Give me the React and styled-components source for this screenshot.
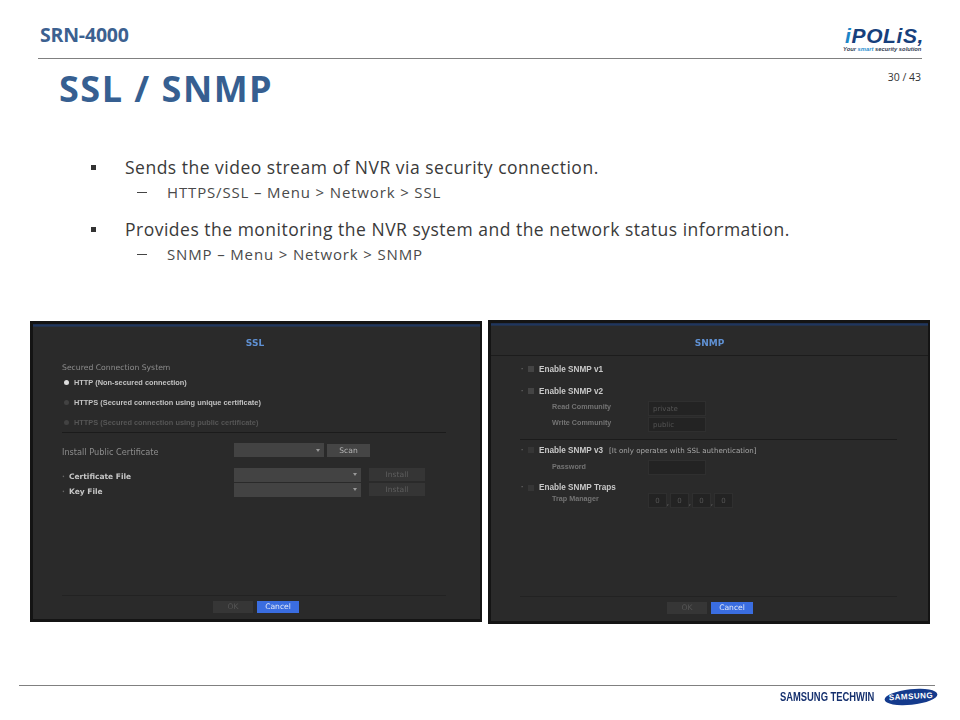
import styled, { createGlobalStyle } from 'styled-components';

const GlobalStyle = createGlobalStyle`
    html, body { margin: 0; padding: 0; background: #fff; }
    body { font-family: "Open Sans", "Noto Sans", sans-serif; }
`;

const Slide = styled.div`
    width: 960px;
    height: 720px;
    display: flex;
    flex-direction: column;
    overflow: hidden;
`;

const TopBar = styled.header`
    height: 58px;
    margin: 0 38px;
    display: flex;
    justify-content: space-between;
    align-items: flex-end;
    border-bottom: 1px solid #808080;
`;

const Product = styled.div`
    margin: 0 0 11px 2px;
    font-size: 19.5px;
    line-height: 24px;
    font-weight: 700;
    color: #3c6190;
    letter-spacing: -0.2px;
`;

const Logo = styled.div`
    width: 84px;
    margin: 0 -2px 5px 0;
    text-align: right;
`;

const LogoWord = styled.div`
    font-family: "Liberation Sans", sans-serif;
    font-size: 21px;
    line-height: 17px;
    font-weight: 700;
    font-style: italic;
    letter-spacing: 0.6px;
    color: #17407c;
    span { color: #1c86c8; }
`;

const LogoTag = styled.div`
    margin: 2px 0 0 3px;
    font-family: "Liberation Sans", sans-serif;
    font-size: 5.8px;
    line-height: 7px;
    font-weight: 700;
    font-style: italic;
    text-align: left;
    white-space: nowrap;
    color: #333d52;
    span { color: #2c90cf; }
`;

const TitleRow = styled.div`
    display: flex;
    justify-content: space-between;
    padding: 0 39px 0 59px;
    height: 96px;
`;

const Title = styled.h1`
    margin: 5px 0 0;
    font-size: 36px;
    line-height: 50px;
    font-weight: 700;
    letter-spacing: 1.5px;
    color: #365f91;
`;

const PageNum = styled.div`
    margin-top: 10px;
    font-size: 10.5px;
    line-height: 16px;
    color: #333;
`;

const Bullets = styled.ul`
    list-style: none;
    margin: 0;
    padding: 0 0 0 91px;
    height: 165px;
`;

const Bullet = styled.li`
    display: flex;
    align-items: center;
    height: 24px;
    font-size: 17.5px;
    letter-spacing: 0.5px;
    color: #3a3a3a;
    white-space: nowrap;
    &::before {
        content: '';
        width: 5px;
        height: 5px;
        margin-right: 29px;
        background: #333;
    }
`;

const SubBullet = styled.li`
    display: flex;
    align-items: center;
    height: 26px;
    margin-bottom: 12px;
    padding-left: 46px;
    font-size: 15px;
    letter-spacing: 0.85px;
    color: #4a4a4a;
    white-space: nowrap;
    &::before {
        content: '';
        width: 10px;
        height: 1px;
        margin-right: 20px;
        background: #444;
    }
`;

const Shots = styled.div`
    display: flex;
    align-items: flex-start;
    gap: 6px;
    padding-left: 30px;
    height: 365px;
`;

const Screen = styled.section`
    box-sizing: border-box;
    width: ${p => p.$w}px;
    height: ${p => p.$h}px;
    margin-top: ${p => p.$top || 0}px;
    border: 3px solid #141414;
    border-right-width: 2px;
    background: linear-gradient(#1f2c46 0, #1f3a68 2px, #2a2a2a 3px, #2a2a2a 100%);
    display: flex;
    flex-direction: column;
    font-family: "DejaVu Sans", sans-serif;
    font-size: 7.6px;
    color: #c4c4c4;
    white-space: nowrap;
`;

const ScreenBody = styled.div`
    flex: 1;
    padding: 0 ${p => p.$right}px 0 ${p => p.$left}px;
    filter: blur(0.45px);
`;

const ScreenTitle = styled.div`
    height: ${p => p.$h}px;
    padding: ${p => p.$pad}px ${p => p.$nudge || 0}px 0 0;
    box-sizing: border-box;
    text-align: center;
    font-size: 9px;
    font-weight: 700;
    color: #5f90d2;
    filter: blur(0.3px);
    border-bottom: ${p => (p.$line ? '1px solid #1c1c1c' : 'none')};
`;

const GroupLabel = styled.div`
    height: 14px;
    line-height: 14px;
    font-size: 7.7px;
    color: #8c8c8c;
`;

const RadioRow = styled.div`
    display: flex;
    align-items: center;
    gap: 5px;
    height: ${p => p.$h || 20}px;
    margin-top: ${p => p.$mt || 0}px;
    padding-left: 2px;
    font-family: "Liberation Sans", sans-serif;
    font-weight: 700;
    font-size: 7.4px;
    color: ${p => (p.$off ? '#555' : '#c2c2c2')};
`;

const Radio = styled.span`
    width: 5px;
    height: 5px;
    border-radius: 50%;
    background: ${p => (p.$on ? '#dcdcdc' : '#424242')};
`;

const Rule = styled.div`
    height: 1px;
    margin: ${p => p.$m || '0'};
    background: #1b1b1b;
`;

const FormRow = styled.div`
    display: flex;
    align-items: center;
    height: ${p => p.$h}px;
`;

const FieldLabel = styled.div`
    position: relative;
    width: 172px;
    box-sizing: border-box;
    padding-top: ${p => (p.$strong ? '4px' : '3px')};
    padding-left: ${p => (p.$strong ? '7px' : '0')};
    font-size: ${p => (p.$strong ? '7.5px' : '8.2px')};
    font-weight: ${p => (p.$strong ? 700 : 400)};
    color: ${p => (p.$strong ? '#c6c6c6' : '#8c8c8c')};
    &::before {
        content: '${p => (p.$strong ? '·' : '')}';
        position: absolute;
        left: 0;
        color: #666;
    }
`;

const Select = styled.div`
    box-sizing: border-box;
    width: ${p => p.$w}px;
    height: 14px;
    padding-right: 4px;
    display: flex;
    align-items: center;
    justify-content: flex-end;
    background: #434343;
    &::after {
        content: '';
        border: 2px solid transparent;
        border-top: 3px solid #999;
        border-bottom: 0;
    }
`;

const GhostBtn = styled.div`
    width: ${p => p.$w}px;
    height: 13px;
    margin-left: ${p => p.$gap}px;
    line-height: 13px;
    text-align: center;
    background: ${p => (p.$off ? '#353535' : '#454545')};
    color: ${p => (p.$off ? '#5e5e5e' : '#b5b5b5')};
`;

const ScreenFoot = styled.div`
    height: ${p => p.$h}px;
    margin: 0 ${p => p.$right}px 0 ${p => p.$left}px;
    padding: 5px 0 0 ${p => p.$start}px;
    box-sizing: border-box;
    display: flex;
    gap: 4px;
    border-top: 1px solid #222;
    filter: blur(0.4px);
`;

const FootBtn = styled.div`
    width: ${p => p.$w}px;
    height: 12px;
    line-height: 12px;
    text-align: center;
    background: ${p => (p.$primary ? '#3a6de0' : '#363636')};
    color: ${p => (p.$primary ? '#e3e9f8' : '#555')};
`;

const CheckRow = styled.div`
    position: relative;
    display: flex;
    align-items: center;
    box-sizing: border-box;
    height: ${p => p.$h}px;
    padding-top: ${p => p.$pad || 0}px;
    font-family: "Liberation Sans", sans-serif;
    font-weight: 700;
    font-size: 8.2px;
    color: #c8c8c8;
    &::before {
        content: '·';
        position: absolute;
        left: 1px;
        color: #666;
    }
`;

const Check = styled.span`
    width: 6px;
    height: 6px;
    margin: 0 5px 0 8px;
    background: ${p => (p.$dim ? '#363636' : '#444')};
`;

const Note = styled.span`
    margin-left: 6px;
    font-family: "DejaVu Sans", sans-serif;
    font-size: 7.1px;
    font-weight: 400;
    color: #a8a8a8;
`;

const SubRow = styled.div`
    display: flex;
    align-items: center;
    height: ${p => p.$h}px;
    padding-left: 32px;
    font-family: "Liberation Sans", sans-serif;
    font-size: 7.2px;
    font-weight: 700;
    color: #747474;
`;

const SubLabel = styled.div`
    width: 96px;
    padding-bottom: ${p => p.$lift || 3}px;
`;

const Input = styled.div`
    position: relative;
    box-sizing: border-box;
    width: ${p => p.$w}px;
    height: 15px;
    line-height: 14px;
    padding-left: ${p => (p.$center ? 0 : 4)}px;
    text-align: ${p => (p.$center ? 'center' : 'left')};
    background: #232323;
    border: 1px solid #2f2f2f;
    font-family: "DejaVu Sans", sans-serif;
    font-weight: 400;
    font-size: 7px;
    color: #555;
`;

const Octets = styled.div`
    display: flex;
    gap: 3px;
`;

const Octet = styled(Input)`
    &:not(:last-child)::after {
        content: ',';
        position: absolute;
        right: -3px;
        bottom: -3px;
        color: #777;
    }
`;

const Footer = styled.footer`
    margin: 0 25px 0 19px;
    height: 35px;
    padding-top: 1px;
    box-sizing: border-box;
    border-top: 1px solid #808080;
    display: flex;
    justify-content: flex-end;
    align-items: flex-start;
    gap: 10px;
`;

const Techwin = styled.div`
    width: 94px;
    font-family: "Liberation Sans", sans-serif;
    font-size: 12.5px;
    line-height: 20px;
    font-weight: 700;
    white-space: nowrap;
    transform: scaleX(0.75);
    transform-origin: left center;
    color: #15306e;
`;

const SamsungMark = styled.svg`
    margin-right: -3px;
`;

export default function App() {
    return (
        <Slide>
            <GlobalStyle />
            <TopBar>
                <Product>SRN-4000</Product>
                <Logo>
                    <LogoWord><span>i</span>POLiS,</LogoWord>
                    <LogoTag>Your <span>smart</span> security solution</LogoTag>
                </Logo>
            </TopBar>
            <TitleRow>
                <Title>SSL / SNMP</Title>
                <PageNum>30 / 43</PageNum>
            </TitleRow>
            <Bullets>
                <Bullet>Sends the video stream of NVR via security connection.</Bullet>
                <SubBullet>HTTPS/SSL – Menu &gt; Network &gt; SSL</SubBullet>
                <Bullet>Provides the monitoring the NVR system and the network status information.</Bullet>
                <SubBullet>SNMP – Menu &gt; Network &gt; SNMP</SubBullet>
            </Bullets>
            <Shots>
                <Screen $w={452} $h={301} $top={1}>
                    <ScreenTitle $h={37} $pad={14} $nudge={3}>SSL</ScreenTitle>
                    <ScreenBody $left={29} $right={34}>
                        <GroupLabel>Secured Connection System</GroupLabel>
                        <RadioRow $h={14}><Radio $on />HTTP (Non-secured connection)</RadioRow>
                        <RadioRow $mt={3}><Radio />HTTPS (Secured connection using unique certificate)</RadioRow>
                        <RadioRow $off><Radio />HTTPS (Secured connection using public certificate)</RadioRow>
                        <Rule />
                        <FormRow $h={34}>
                            <FieldLabel>Install Public Certificate</FieldLabel>
                            <Select $w={90} />
                            <GhostBtn $w={43} $gap={3}>Scan</GhostBtn>
                        </FormRow>
                        <FormRow $h={15}>
                            <FieldLabel $strong>Certificate File</FieldLabel>
                            <Select $w={127} />
                            <GhostBtn $w={56} $gap={8} $off>Install</GhostBtn>
                        </FormRow>
                        <FormRow $h={15}>
                            <FieldLabel $strong>Key File</FieldLabel>
                            <Select $w={127} />
                            <GhostBtn $w={56} $gap={8} $off>Install</GhostBtn>
                        </FormRow>
                    </ScreenBody>
                    <ScreenFoot $h={24} $left={29} $right={34} $start={151}>
                        <FootBtn $w={40}>OK</FootBtn>
                        <FootBtn $w={42} $primary>Cancel</FootBtn>
                    </ScreenFoot>
                </Screen>
                <Screen $w={442} $h={304}>
                    <ScreenTitle $h={33} $pad={15} $line>SNMP</ScreenTitle>
                    <ScreenBody $left={29} $right={31}>
                        <CheckRow $h={26}><Check />Enable SNMP v1</CheckRow>
                        <CheckRow $h={18}><Check />Enable SNMP v2</CheckRow>
                        <SubRow $h={16}><SubLabel>Read Community</SubLabel><Input $w={58}>private</Input></SubRow>
                        <SubRow $h={16}><SubLabel>Write Community</SubLabel><Input $w={58}>public</Input></SubRow>
                        <Rule $m="7px 0 0" />
                        <CheckRow $h={20}><Check $dim />Enable SNMP v3<Note>[It only operates with SSL authentication]</Note></CheckRow>
                        <SubRow $h={15}><SubLabel>Password</SubLabel><Input $w={58} /></SubRow>
                        <CheckRow $h={19} $pad={6}><Check $dim />Enable SNMP Traps</CheckRow>
                        <SubRow $h={12}>
                            <SubLabel $lift={4}>Trap Manager</SubLabel>
                            <Octets>
                                <Octet $w={19} $center>0</Octet>
                                <Octet $w={19} $center>0</Octet>
                                <Octet $w={19} $center>0</Octet>
                                <Octet $w={19} $center>0</Octet>
                            </Octets>
                        </SubRow>
                    </ScreenBody>
                    <ScreenFoot $h={25} $left={29} $right={31} $start={147}>
                        <FootBtn $w={40}>OK</FootBtn>
                        <FootBtn $w={42} $primary>Cancel</FootBtn>
                    </ScreenFoot>
                </Screen>
            </Shots>
            <Footer>
                <Techwin>SAMSUNG TECHWIN</Techwin>
                <SamsungMark width="54" height="20" viewBox="0 0 54 20">
                    <ellipse cx="27" cy="10" rx="26.5" ry="7.8" transform="rotate(-6 27 10)" fill="#143a8c" />
                    <text x="27" y="12" textAnchor="middle" fontFamily="Liberation Sans, sans-serif" fontSize="8" fontWeight="700" letterSpacing="0.5" fill="#fff" transform="rotate(-3 27 10)">
                        SAMSUNG
                    </text>
                </SamsungMark>
            </Footer>
        </Slide>
    );
}
